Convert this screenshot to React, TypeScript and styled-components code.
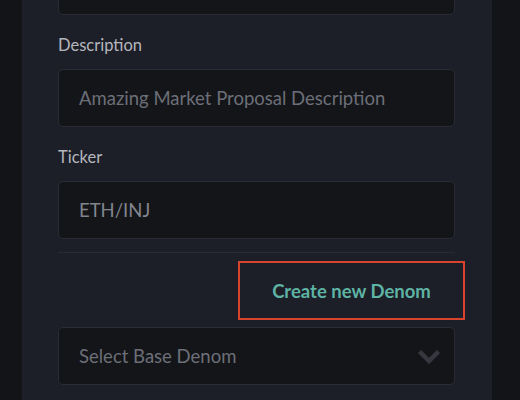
import styled, { createGlobalStyle } from 'styled-components';

const GlobalStyle = createGlobalStyle`
  html {
    overflow: hidden;
  }
  body {
    margin: 0;
    padding: 0;
    background-color: #131418;
    font-family: Lato, "Noto Sans", sans-serif;
  }
`;

function App() {
    return (
        <Page>
            <GlobalStyle/>
            <Panel>
                <Input value="" readOnly/>
                <Label>Description</Label>
                <Input placeholder="Amazing Market Proposal Description" readOnly/>
                <Label>Ticker</Label>
                <Input value="ETH/INJ" readOnly/>
                <Divider/>
                <ButtonRow>
                    <CreateButton>Create new Denom</CreateButton>
                </ButtonRow>
                <SelectBox>
                    <SelectText>Select Base Denom</SelectText>
                    <svg width="24" height="15" viewBox="0 0 24 15">
                        <polyline points="2.5,2.5 12,12 21.5,2.5" fill="none" stroke="#37383f" strokeWidth="4.5"/>
                    </svg>
                </SelectBox>
            </Panel>
        </Page>
    );
}

export default App;


const Page = styled.div`
  display: flex;
  flex-direction: column;
  width: 520px;
  height: 400px;
  padding-left: 22px;
  box-sizing: border-box;
  overflow: hidden;
`;

const Panel = styled.div`
  display: flex;
  flex-direction: column;
  flex-shrink: 0;
  width: 470px;
  height: 460px;
  margin-top: -43px;
  padding: 0 37px 0 36px;
  box-sizing: border-box;
  background-color: #1d1f28;
`;

const Input = styled.input`
  display: block;
  flex-shrink: 0;
  width: 100%;
  height: 58px;
  padding: 0 20px;
  box-sizing: border-box;
  border: 1px solid #2a2c35;
  border-radius: 5px;
  background-color: #141519;
  color: #82858e;
  font-family: Lato, "Noto Sans", sans-serif;
  font-size: 18.5px;
  outline: none;

  &::placeholder {
    color: #6c6f78;
  }
`;

const Label = styled.div`
  height: 24px;
  margin: 18px 0 12px;
  color: #b4b6bd;
  font-size: 16.5px;
  line-height: 24px;
`;

const Divider = styled.div`
  flex-shrink: 0;
  height: 1px;
  margin-top: 13px;
  background-color: #292b34;
`;

const ButtonRow = styled.div`
  display: flex;
  justify-content: flex-end;
  margin: 8px -10px 7px 0;
`;

const CreateButton = styled.button`
  width: 227px;
  height: 59px;
  border: 2px solid #d8432e;
  background-color: transparent;
  color: #5db3a4;
  font-family: Lato, "Noto Sans", sans-serif;
  font-size: 18.5px;
  font-weight: 700;
  cursor: pointer;
`;

const SelectBox = styled.div`
  display: flex;
  flex-shrink: 0;
  align-items: center;
  justify-content: space-between;
  height: 58px;
  padding: 0 13px 0 20px;
  box-sizing: border-box;
  border: 1px solid #2a2c35;
  border-radius: 5px;
  background-color: #141519;
`;

const SelectText = styled.span`
  color: #6c6f78;
  font-size: 18.5px;
`;
